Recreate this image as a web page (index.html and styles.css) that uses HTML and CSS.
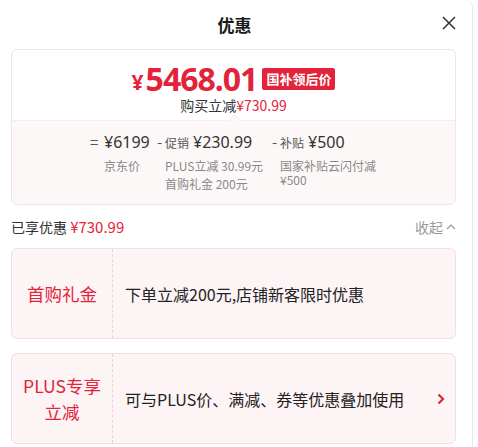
FILE: index.html
```html
<!doctype html>
<html>
<head>
<meta charset="utf-8">
<title>优惠</title>
<link rel="stylesheet" href="styles.css">
</head>
<body>
<div class="panel">
  <div class="head">
    <div class="title">优惠</div>
    <svg class="close" width="14" height="14" viewBox="0 0 14 14"><path d="M1 1L13 13M13 1L1 13" stroke="#333" stroke-width="1.5" fill="none"/></svg>
  </div>

  <div class="pricecard">
    <div class="ptop">
      <div class="prow">
        <span class="yen">¥</span><span class="big">5468.01</span><span class="badge">国补领后价</span>
      </div>
      <div class="save">购买立减<span class="red">¥730.99</span></div>
    </div>
    <div class="pbot">
      <div class="col c1">
        <div class="line"><span class="op">=</span><span class="num">¥6199</span></div>
        <div class="sub">京东价</div>
      </div>
      <div class="col c2">
        <div class="line"><span class="op">-</span><span class="lab">促销</span><span class="num">¥230.99</span></div>
        <div class="sub">PLUS立减 30.99元<br>首购礼金 200元</div>
      </div>
      <div class="col c3">
        <div class="line"><span class="op">-</span><span class="lab">补贴</span><span class="num">¥500</span></div>
        <div class="sub">国家补贴云闪付减<br>¥500</div>
      </div>
    </div>
  </div>

  <div class="enjoy">
    <div>已享优惠 <span class="red total">¥730.99</span></div>
    <div class="fold">收起 <svg width="10" height="7" viewBox="0 0 10 7"><path d="M1 6L5 2L9 6" stroke="#999" stroke-width="1.2" fill="none"/></svg></div>
  </div>

  <div class="item">
    <div class="itag">首购礼金</div>
    <div class="itext">下单立减200元,店铺新客限时优惠</div>
  </div>

  <div class="item">
    <div class="itag">PLUS专享<br>立减</div>
    <div class="itext">可与PLUS价、满减、券等优惠叠加使用</div>
    <svg class="arrow" width="8" height="12" viewBox="0 0 8 12"><path d="M1.5 1.5L6 6L1.5 10.5" stroke="#e2233a" stroke-width="2.2" fill="none"/></svg>
  </div>
</div>
</body>
</html>
```

FILE: styles.css
```css
body{
        margin:0;
        background:#fff;
        font-family:"Noto Sans CJK SC","Noto Sans",sans-serif;
        color:#333;
}
.red{
        color:#e2233a;
}
.panel{
        width:473px;
        height:447px;
        border-right:1px solid #e6e6e6;
        border-top-right-radius:8px;
        padding:0 16px 0 11px;
        box-sizing:border-box;
        overflow:hidden;
}
.head{
        height:49px;
        display:flex;
        align-items:center;
        justify-content:center;
        position:relative;
}
.title{
        font-size:17px;
        font-weight:bold;
        color:#1a1a1a;
        margin-left:2px;
}
.close{
        position:absolute;
        right:0;
        top:16px;
}
.pricecard{
        border:1px solid #f4e2e4;
        border-radius:6px;
        overflow:hidden;
}
.ptop{
        height:70px;
        display:flex;
        flex-direction:column;
        align-items:center;
        position:relative;
        border-bottom:1px solid #f6ecec;
}
.ptop:after{
        content:"";
        position:absolute;
        left:50%;
        bottom:-5px;
        width:8px;
        height:8px;
        background:#fdf8f8;
        border-left:1px solid #f6ecec;
        border-top:1px solid #f6ecec;
        transform:translateX(-4px) rotate(45deg);
}
.prow{
        display:flex;
        align-items:center;
        height:34px;
        margin-top:12px;
        color:#e2233a;
        font-family:"Noto Sans","Noto Sans CJK SC",sans-serif;
}
.yen{
        font-size:21px;
        line-height:22px;
        font-weight:bold;
        margin-top:6px;
        margin-right:2px;
}
.big{
        font-size:32px;
        line-height:34px;
        font-weight:bold;
        letter-spacing:-1px;
}
.badge{
        background:#e2233a;
        color:#fff;
        font-size:13px;
        font-weight:bold;
        padding:0 4px;
        border-radius:2px;
        margin-left:5px;
        line-height:22px;
        font-family:"Noto Sans CJK SC",sans-serif;
}
.save{
        font-size:14px;
        line-height:17px;
        margin-top:1px;
        color:#333;
}
.pbot{
        background:#fdf8f8;
        height:83px;
        display:flex;
        padding-left:78px;
        box-sizing:border-box;
}
.c1{
        width:67px;
}
.c2{
        width:115px;
}
.line{
        display:flex;
        align-items:baseline;
        height:24px;
        margin-top:10px;
        white-space:nowrap;
}
.op{
        font-size:15px;
        color:#555;
        width:8px;
}
.c1 .op{
        width:14px;
}
.lab{
        font-size:12px;
        color:#555;
        margin-right:4px;
}
.num{
        font-size:16px;
        color:#333;
        font-family:"Noto Sans","Noto Sans CJK SC",sans-serif;
}
.sub{
        font-size:12px;
        line-height:18px;
        color:#888;
        padding-left:8px;
        margin-top:2px;
        white-space:nowrap;
}
.c1 .sub{
        padding-left:14px;
        line-height:16px;
        margin-top:3px;
}
.c3 .sub{
        line-height:14px;
        margin-top:4px;
}
.enjoy{
        display:flex;
        justify-content:space-between;
        align-items:center;
        height:43px;
        font-size:14px;
        color:#333;
}
.total{
        font-size:15px;
}
.fold{
        color:#999;
        display:flex;
        align-items:center;
        gap:3px;
}
.item{
        height:91px;
        background:#fdf4f5;
        border:1px solid #f2dfe1;
        border-radius:6px;
        display:flex;
        align-items:center;
        margin-bottom:14px;
        box-sizing:border-box;
}
.itag{
        width:100px;
        height:100%;
        border-right:1px dashed #ecd2d6;
        display:flex;
        align-items:center;
        justify-content:center;
        text-align:center;
        color:#e2233a;
        font-size:17.5px;
        line-height:26px;
}
.itext{
        flex:1;
        padding-left:12px;
        font-size:16px;
        color:#222;
}
.arrow{
        margin-right:10px;
}
```
